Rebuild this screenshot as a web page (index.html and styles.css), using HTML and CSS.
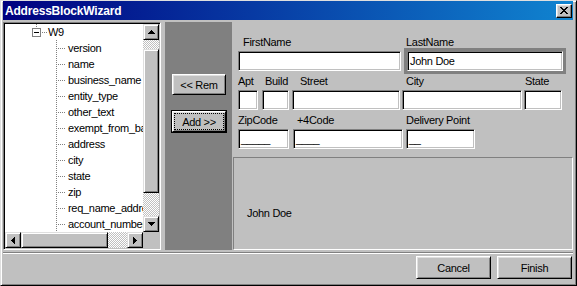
FILE: index.html
```html
<!DOCTYPE html>
<html>
<head>
<meta charset="utf-8">
<title>AddressBlockWizard</title>
<link rel="stylesheet" href="styles.css">
</head>
<body>
<div class="window">
  <div class="titlebar">
    <span class="title">AddressBlockWizard</span>
    <div class="close">
      <svg width="8" height="7" viewBox="0 0 8 7" fill="#000">
        <rect x="0" y="0" width="2" height="1"/><rect x="6" y="0" width="2" height="1"/>
        <rect x="1" y="1" width="2" height="1"/><rect x="5" y="1" width="2" height="1"/>
        <rect x="2" y="2" width="4" height="1"/>
        <rect x="3" y="3" width="2" height="1"/>
        <rect x="2" y="4" width="4" height="1"/>
        <rect x="1" y="5" width="2" height="1"/><rect x="5" y="5" width="2" height="1"/>
        <rect x="0" y="6" width="2" height="1"/><rect x="6" y="6" width="2" height="1"/>
      </svg>
    </div>
  </div>

  <div class="main">
    <div class="tree">
      <div class="tree-items">
        <div class="node"><span class="root-lines"><span class="toggle"><span class="minus"></span></span></span><span class="label">W9</span></div>
        <div class="node"><span class="branch"></span><span class="label">version</span></div>
        <div class="node"><span class="branch"></span><span class="label">name</span></div>
        <div class="node"><span class="branch"></span><span class="label">business_name</span></div>
        <div class="node"><span class="branch"></span><span class="label">entity_type</span></div>
        <div class="node"><span class="branch"></span><span class="label">other_text</span></div>
        <div class="node"><span class="branch"></span><span class="label">exempt_from_backup_withholding</span></div>
        <div class="node"><span class="branch"></span><span class="label">address</span></div>
        <div class="node"><span class="branch"></span><span class="label">city</span></div>
        <div class="node"><span class="branch"></span><span class="label">state</span></div>
        <div class="node"><span class="branch"></span><span class="label">zip</span></div>
        <div class="node"><span class="branch"></span><span class="label">req_name_address</span></div>
        <div class="node"><span class="branch"></span><span class="label">account_numbers</span></div>
      </div>
      <div class="vscroll">
        <div class="sbtn"><svg width="7" height="4" viewBox="0 0 7 4"><path d="M3 0h1v1h1v1h1v1h1v1H0V3h1V2h1V1h1z"/></svg></div>
        <div class="track t-top"></div>
        <div class="thumb v-thumb"></div>
        <div class="track t-fill"></div>
        <div class="sbtn"><svg width="7" height="4" viewBox="0 0 7 4"><path d="M0 0h7v1H6v1H5v1H4v1H3V3H2V2H1V1H0z"/></svg></div>
      </div>
      <div class="hscroll">
        <div class="sbtn"><svg width="4" height="7" viewBox="0 0 4 7"><path d="M3 0h1v7H3V6H2V5H1V4H0V3h1V2h1V1h1z"/></svg></div>
        <div class="thumb h-thumb"></div>
        <div class="track t-fill"></div>
        <div class="sbtn"><svg width="4" height="7" viewBox="0 0 4 7"><path d="M0 0h1v1h1v1h1v1h1v1H3v1H2v1H1v1H0z"/></svg></div>
      </div>
      <div class="corner"></div>
    </div>

    <div class="movebar">
      <div class="btn rem">&lt;&lt; Rem</div>
      <div class="default-ring"><div class="btn add"><span class="focus">Add &gt;&gt;</span></div></div>
    </div>

    <div class="right">
      <div class="form">
        <div class="row">
          <div class="field f-first"><span class="lbl">FirstName</span><div class="inp w-first"></div></div>
          <div class="field f-last"><span class="lbl">LastName</span><div class="focus-frame"><div class="inp w-last">John Doe</div></div></div>
        </div>
        <div class="row">
          <div class="field"><span class="lbl">Apt</span><div class="inp w-apt"></div></div>
          <div class="field f-build"><span class="lbl">Build</span><div class="inp w-build"></div></div>
          <div class="field f-street"><span class="lbl">Street</span><div class="inp w-street"></div></div>
          <div class="field f-city"><span class="lbl">City</span><div class="inp w-city"></div></div>
          <div class="field f-state"><span class="lbl">State</span><div class="inp w-state"></div></div>
        </div>
        <div class="row">
          <div class="field"><span class="lbl">ZipCode</span><div class="inp w-zip">_____</div></div>
          <div class="field f-plus4"><span class="lbl">+4Code</span><div class="inp w-plus4">____</div></div>
          <div class="field f-dp"><span class="lbl">Delivery Point</span><div class="inp w-dp">__</div></div>
        </div>
      </div>
      <div class="preview">John Doe</div>
    </div>
  </div>

  <div class="separator"></div>

  <div class="actions">
    <div class="btn dlg">Cancel</div>
    <div class="btn dlg">Finish</div>
  </div>
</div>
</body>
</html>
```

FILE: styles.css
```css
* { box-sizing: border-box; }
html, body { margin: 0; padding: 0; }
body {
  background: #c0c0c0;
  font-family: "Liberation Sans", Arial, sans-serif;
  font-size: 11px;
  letter-spacing: -0.3px;
  color: #000;
}

.window {
  width: 577px;
  height: 286px;
  background: #c0c0c0;
  border: 1px solid;
  border-color: #dfdfdf #000 #000 #dfdfdf;
  box-shadow: inset 1px 1px #fff, inset -1px -1px #808080;
  padding: 0 3px 2px 2px;
  display: flex;
  flex-direction: column;
  overflow: hidden;
}

/* title bar */
.titlebar {
  height: 19px;
  flex: none;
  display: flex;
  align-items: center;
  padding: 0 1px 0 2px;
  background: linear-gradient(to right, #000080, #1084d0);
}
.title {
  color: #fff;
  font-weight: bold;
  font-size: 12px;
  letter-spacing: -0.2px;
  line-height: 14px;
}
.close {
  margin-left: auto;
  width: 16px;
  height: 14px;
  background: #c0c0c0;
  border: 1px solid;
  border-color: #fff #000 #000 #fff;
  box-shadow: inset -1px -1px #808080, inset 1px 1px #dfdfdf;
  display: flex;
  align-items: center;
  justify-content: center;
}
.close svg { display: block; }

/* main area */
.main {
  margin-top: 2px;
  height: 228px;
  flex: none;
  display: flex;
}

/* tree */
.tree {
  width: 158px;
  height: 228px;
  flex: none;
  border: 1px solid;
  border-color: #808080 #fff #fff #808080;
  box-shadow: inset 1px 1px #000, inset -1px -1px #c0c0c0;
  padding: 1px;
  display: grid;
  grid-template-columns: 138px 16px;
  grid-template-rows: 208px 16px;
}
.tree-items {
  background: #fff;
  overflow: hidden;
}
.node {
  height: 16px;
  display: flex;
  align-items: center;
  white-space: nowrap;
}
.label { line-height: 16px; }
.root-lines {
  width: 43px;
  height: 16px;
  flex: none;
  padding: 4px 0 0 27px;
  background-image:
    repeating-linear-gradient(to bottom, #808080 0 1px, transparent 1px 2px),
    repeating-linear-gradient(to right, #808080 0 1px, transparent 1px 2px);
  background-size: 1px 4px, 6px 1px;
  background-position: 31px 0, 37px 8px;
  background-repeat: no-repeat;
}
.toggle {
  display: flex;
  align-items: center;
  justify-content: center;
  width: 9px;
  height: 9px;
  border: 1px solid #808080;
  background: #fff;
}
.minus { width: 5px; height: 1px; background: #000; }
.branch {
  width: 63px;
  height: 16px;
  flex: none;
  background-image:
    repeating-linear-gradient(to bottom, #808080 0 1px, transparent 1px 2px),
    repeating-linear-gradient(to right, #808080 0 1px, transparent 1px 2px);
  background-size: 1px 16px, 8px 1px;
  background-position: 51px 0, 53px 8px;
  background-repeat: no-repeat;
}

/* scrollbars */
.vscroll { display: flex; flex-direction: column; }
.hscroll { display: flex; }
.sbtn, .thumb, .btn, .corner { background: #c0c0c0; }
.sbtn {
  width: 16px;
  height: 16px;
  flex: none;
  border: 1px solid;
  border-color: #dfdfdf #000 #000 #dfdfdf;
  box-shadow: inset 1px 1px #fff, inset -1px -1px #808080;
  display: flex;
  align-items: center;
  justify-content: center;
}
.sbtn svg { display: block; fill: #000; }
.thumb {
  flex: none;
  border: 1px solid;
  border-color: #dfdfdf #000 #000 #dfdfdf;
  box-shadow: inset 1px 1px #fff, inset -1px -1px #808080;
}
.v-thumb { height: 144px; }
.h-thumb { width: 87px; }
.track {
  background: repeating-conic-gradient(#c0c0c0 0 25%, #fff 0 50%) 0 0 / 2px 2px;
}
.t-top { height: 9px; flex: none; }
.t-fill { flex: 1; }

/* middle dark bar */
.movebar {
  width: 67px;
  flex: none;
  margin-left: 4px;
  background: #808080;
  display: flex;
  flex-direction: column;
  padding: 52px 0 0 7px;
}
.btn {
  border: 1px solid;
  border-color: #fff #000 #000 #fff;
  box-shadow: inset 1px 1px #dfdfdf, inset -1px -1px #808080;
  display: flex;
  align-items: center;
  justify-content: center;
  white-space: nowrap;
}
.rem { width: 54px; height: 21px; }
.default-ring {
  margin: 15px 0 0 -1px;
  width: 56px;
  border: 1px solid #000;
}
.add { width: 54px; height: 21px; }
.focus {
  display: flex;
  align-items: center;
  justify-content: center;
  width: 48px;
  height: 15px;
  outline: 1px dotted #000;
}

/* right side */
.right {
  flex: 1;
  display: flex;
  flex-direction: column;
}
.form {
  padding: 14px 0 0 6px;
  display: flex;
  flex-direction: column;
  gap: 4px;
}
.row { display: flex; }
.field { display: flex; flex-direction: column; }
.lbl { line-height: 13px; height: 13px; margin-bottom: 2px; white-space: nowrap; }
.inp {
  height: 20px;
  background: #fff;
  border: 1px solid;
  border-color: #808080 #fff #fff #808080;
  box-shadow: inset 1px 1px #000, inset -1px -1px #c0c0c0;
  padding: 2px 0 0 2px;
  line-height: 15px;
  white-space: nowrap;
  overflow: hidden;
}
.f-first .lbl { padding-left: 5px; }
.w-first { width: 163px; }
.f-last { margin-left: 6px; }
.f-last .lbl { margin-left: -1px; }
.focus-frame {
  margin: -3px;
  border: 3px solid #808080;
}
.w-last { width: 156px; }

.w-apt { width: 20px; }
.f-build { margin-left: 4px; }
.f-build .lbl { padding-left: 3px; }
.w-build { width: 27px; }
.f-street { margin-left: 3px; }
.f-street .lbl { padding-left: 8px; }
.w-street { width: 108px; }
.f-city { margin-left: 2px; }
.f-city .lbl { padding-left: 4px; }
.w-city { width: 120px; }
.f-state { margin-left: 2px; }
.f-state .lbl { padding-left: 1px; }
.w-state { width: 38px; }

.w-zip { width: 51px; }
.f-plus4 { margin-left: 4px; }
.f-plus4 .lbl { padding-left: 4px; }
.w-plus4 { width: 110px; }
.f-dp { margin-left: 3px; }
.w-dp { width: 69px; }

.preview {
  margin: 8px 0 0 1px;
  flex: 1;
  border: 1px solid;
  border-color: #808080 #fff #fff #808080;
  padding: 49px 0 0 13px;
  line-height: 13px;
}

/* bottom */
.separator {
  margin-top: 2px;
  height: 2px;
  flex: none;
  border-top: 1px solid #808080;
  border-bottom: 1px solid #fff;
}
.actions {
  margin-top: 2px;
  display: flex;
  justify-content: flex-end;
  gap: 6px;
  padding-right: 1px;
}
.dlg { width: 75px; height: 23px; }
```
